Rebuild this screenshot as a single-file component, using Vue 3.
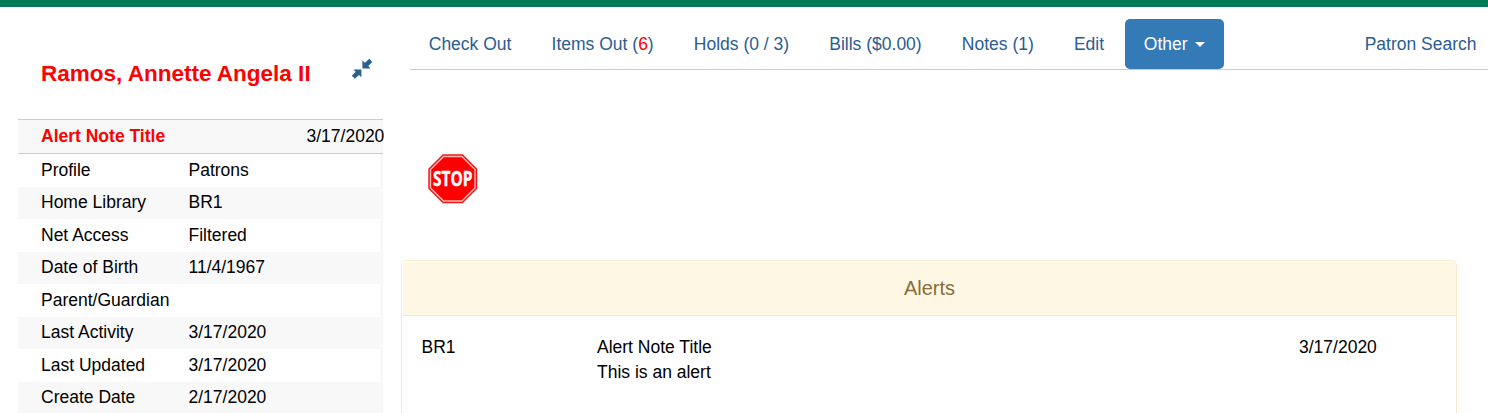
<script setup>
const details = [
  ['Profile', 'Patrons'],
  ['Home Library', 'BR1'],
  ['Net Access', 'Filtered'],
  ['Date of Birth', '11/4/1967'],
  ['Parent/Guardian', ''],
  ['Last Activity', '3/17/2020'],
  ['Last Updated', '3/17/2020'],
  ['Create Date', '2/17/2020'],
]
</script>

<template>
  <div class="page">
    <div class="topbar"></div>
    <div class="columns">
      <aside class="sidebar">
        <header class="patron">
          <h1>Ramos, Annette Angela II</h1>
          <svg class="collapse" width="22" height="22" viewBox="0 0 22 22">
            <path d="M11.4 2.6V10.4H19.5L17.2 7.9L21.2 3.9L18.2 .8L14 4.8Z" />
            <path d="M10.4 11.4H2.4L4.7 13.8L.8 17.8L3.8 20.8L8 17.1L10.4 19.3Z" />
          </svg>
        </header>
        <div class="note">
          <strong>Alert Note Title</strong>
          <span>3/17/2020</span>
        </div>
        <dl class="details">
          <div v-for="row in details" :key="row[0]" class="row">
            <dt>{{ row[0] }}</dt>
            <dd>{{ row[1] }}</dd>
          </div>
        </dl>
      </aside>

      <main class="main">
        <nav class="tabs">
          <a>Check Out</a>
          <a>Items Out (<span class="overdue">6</span>)</a>
          <a>Holds (0 / 3)</a>
          <a>Bills ($0.00)</a>
          <a>Notes (1)</a>
          <a>Edit</a>
          <a class="active">Other<i class="caret"></i></a>
          <a class="search">Patron Search</a>
        </nav>

        <svg class="stop" width="50" height="50" viewBox="0 0 50 50">
          <path d="M14.8 .3H34.7L49.2 14.8V34.7L34.7 49.2H14.8L.3 34.7V14.8Z" fill="#f21515" />
          <path d="M15.6 2.5H33.9L47 15.6V33.9L33.9 47H15.6L2.5 33.9V15.6Z" fill="#f00" stroke="#ffb8b8" stroke-width="1.4" />
          <text x="5" y="32.2" textLength="39.4" lengthAdjust="spacingAndGlyphs">STOP</text>
        </svg>

        <section class="panel">
          <h2>Alerts</h2>
          <div class="alert">
            <span>BR1</span>
            <div>
              <div>Alert Note Title</div>
              <div>This is an alert</div>
            </div>
            <span>3/17/2020</span>
          </div>
        </section>
      </main>
    </div>
  </div>
</template>

<style>
body { background: #fff; }
</style>

<style scoped>
.page {
  height: 413px;
  overflow: hidden;
  font: 17.5px/25px "Liberation Sans", Arial, sans-serif;
  color: #000;
}
.topbar { height: 7px; background: #007954; }
.columns { display: flex; }
.sidebar { width: 365px; margin-left: 18px; flex: none; }
.patron {
  display: flex;
  justify-content: space-between;
  height: 112px;
  padding: 0 10px 0 23px;
}
h1 {
  margin: 54px 0 0;
  font-size: 22.5px;
  line-height: 26px;
  color: #f00;
  white-space: nowrap;
}
.collapse { margin-top: 51px; fill: #286090; }
.note {
  display: flex;
  height: 33px;
  line-height: 33px;
  padding-left: 23px;
  border-top: 1px solid #ccc;
  border-bottom: 1px solid #ccc;
  background: #f8f8f8;
  white-space: nowrap;
}
.note strong { width: 265.5px; flex: none; color: #f00; }
.details { margin: 0; }
.row {
  display: flex;
  height: 32.5px;
  line-height: 32px;
  padding-left: 23px;
}
.row:nth-child(odd) { border-right: 3px solid #f8f8f8; }
.row:nth-child(even) { background: #f8f8f8; }
.row:nth-child(even) { line-height: 31px; }
.row dt { width: 147.5px; flex: none; }
.row dd { margin: 0; }
.main { flex: 1; min-width: 0; padding-left: 18px; }
.tabs {
  display: flex;
  gap: 2.65px;
  height: 50px;
  margin: 12px 0 0 9px;
  border-bottom: 1px solid #ccc;
  white-space: nowrap;
}
.tabs a {
  padding: 0 18.75px;
  line-height: 50px;
  color: #2a5d91;
}
.tabs .overdue { color: #f00; }
.tabs .active {
  display: flex;
  align-items: center;
  padding: 0 19px 0 18.3px;
  border-radius: 5px;
  background: #337ab7;
  color: #fff;
}
.caret {
  margin-left: 7px;
  border: 5px solid transparent;
  border-top-color: #fff;
  border-bottom: 0;
}
.tabs .search { margin-left: auto; padding-right: 11.5px; }
.stop { display: block; margin: 84px 0 0 27px; overflow: visible; }
.stop text {
  font: bold 21.5px "Open Sans", sans-serif;
  fill: #fff;
  stroke: #fff;
  stroke-width: .4px;
}
.panel {
  box-sizing: border-box;
  width: 1056px;
  height: 200px;
  margin-top: 56px;
  border: 1px solid #faebcc;
  border-radius: 5px;
}
h2 {
  margin: 1px 0 0 1px;
  height: 53px;
  border-bottom: 1px solid #f5e8c8;
  border-radius: 4px 4px 0 0;
  background: #fef7e3;
  color: #8a6d3b;
  font-size: 20px;
  font-weight: 400;
  line-height: 52px;
  text-align: center;
}
.alert {
  display: grid;
  grid-template-columns: 175.5px 702px auto;
  padding: 19px 0 0 19.5px;
}
</style>
